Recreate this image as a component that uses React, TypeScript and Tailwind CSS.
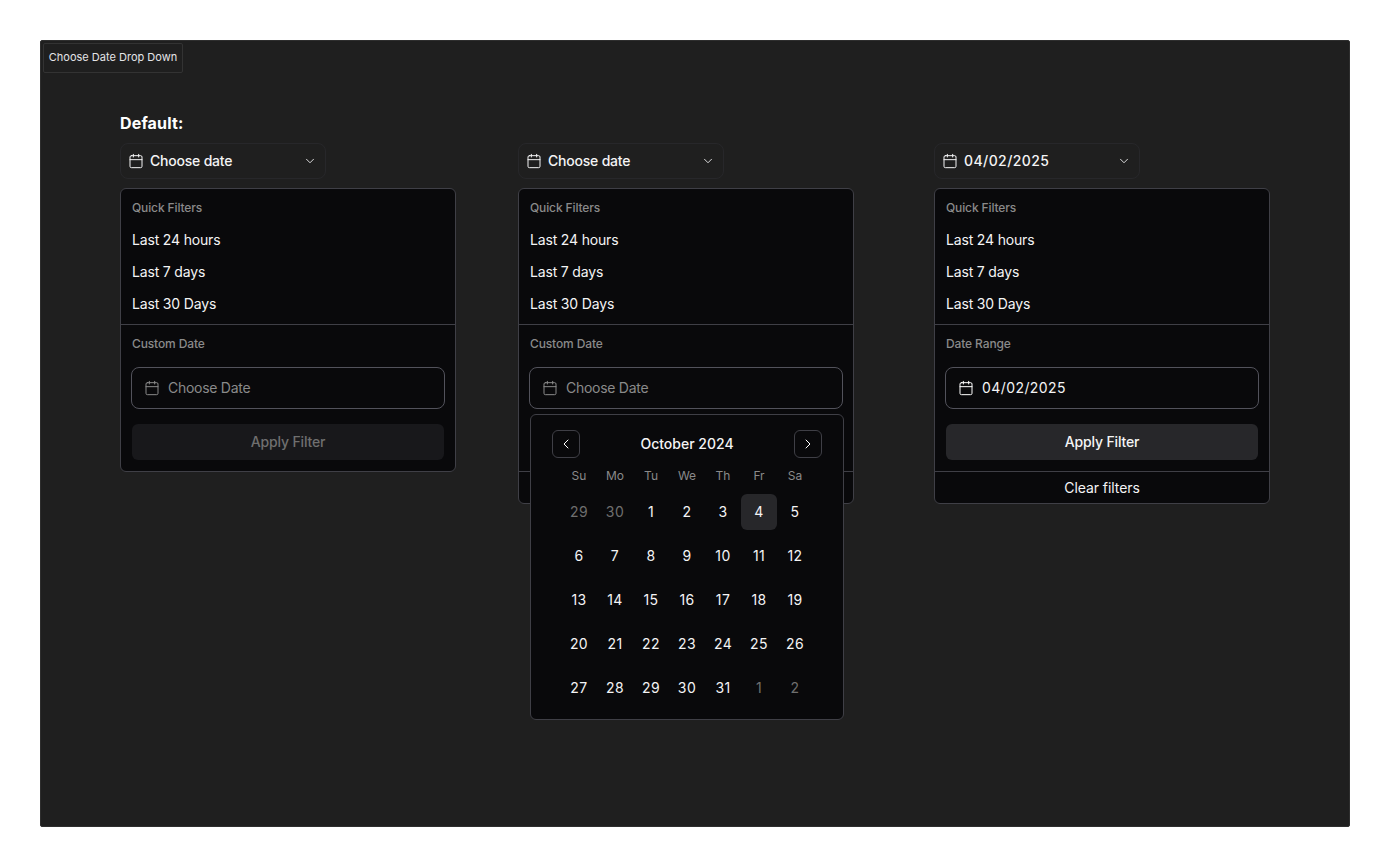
import { Calendar, ChevronDown, ChevronLeft, ChevronRight } from "lucide-react";

const weekDays = ["Su", "Mo", "Tu", "We", "Th", "Fr", "Sa"];
const days = [
  29, 30, 1, 2, 3, 4, 5, 6, 7, 8, 9, 10, 11, 12, 13, 14, 15, 16, 17, 18, 19, 20, 21, 22, 23, 24, 25, 26, 27, 28, 29, 30,
  31, 1, 2,
];

function DateCalendar() {
  return (
    <div className="absolute left-[11px] top-[225px] z-10 h-[306px] w-[314px] rounded-md border border-[#3f3f46] bg-[#09090b] px-[30px] pt-[15px]">
      <div className="mx-[-9px] flex h-[28px] items-center justify-between">
        <button className="flex h-[28px] w-[28px] items-center justify-center rounded-md border border-[#3f3f46] text-white">
          <ChevronLeft size={16} strokeWidth={1.5} />
        </button>
        <span className="text-sm font-[450] text-[#f4f4f5]">October 2024</span>
        <button className="flex h-[28px] w-[28px] items-center justify-center rounded-md border border-[#3f3f46] text-white">
          <ChevronRight size={16} strokeWidth={1.5} />
        </button>
      </div>
      <div className="mt-[8px] grid grid-cols-[repeat(7,36px)]">
        {weekDays.map((d) => (
          <div key={d} className="flex h-[20px] items-center justify-center text-xs text-[#8a8a8a]">
            {d}
          </div>
        ))}
      </div>
      <div className="mt-[8px] grid grid-cols-[repeat(7,36px)] gap-y-[8px]">
        {days.map((d, i) => {
          const outside = i < 2 || i > 32;
          const selected = i === 5;
          return (
            <div
              key={i}
              className={
                "flex h-[36px] items-center justify-center rounded-md text-sm tracking-[0.03em] " +
                (selected ? "bg-[#27272a] " : "") +
                (outside ? "text-[#6f6f6f]" : "text-[#f4f4f5]")
              }
            >
              {d}
            </div>
          );
        })}
      </div>
    </div>
  );
}

interface DropdownProps {
  triggerLabel: string;
  sectionLabel: string;
  inputValue?: string;
  applyEnabled?: boolean;
  showClear?: boolean;
  showCalendar?: boolean;
  className?: string;
}

function DateDropdown({ triggerLabel, sectionLabel, inputValue, applyEnabled, showClear, showCalendar, className }: DropdownProps) {
  // the open calendar covers the apply button and clear row
  const covered = showCalendar ? "invisible " : "";
  return (
    <div className={"w-[336px] " + (className ?? "")}>
      <button className="flex h-[36px] w-[206px] items-center rounded-lg border border-[#27272a] pl-[7px] pr-[8px] text-sm font-[450] text-[#f4f4f5]">
        <Calendar size={16} strokeWidth={1.5} />
        <span className={"ml-[6px] " + (inputValue ? "tracking-[0.03em]" : "tracking-[-0.015em]")}>{triggerLabel}</span>
        <ChevronDown size={14} strokeWidth={1.5} className="ml-auto" />
      </button>
      <div className="relative mt-[9px] rounded-md border border-[#3f3f46] bg-[#09090b]">
        <div className="px-[11px] pt-[12px] pb-[4px]">
          <div className="flex h-[14px] items-center text-xs font-[450] tracking-[-0.01em] text-[#8a8a8a]">Quick Filters</div>
          <div className="mt-[9px] flex flex-col text-sm tracking-[-0.012em] text-[#f4f4f5]">
            <div className="flex h-[32px] items-center">Last 24 hours</div>
            <div className="flex h-[32px] items-center">Last 7 days</div>
            <div className="flex h-[32px] items-center">Last 30 Days</div>
          </div>
        </div>
        <div className="border-t border-[#3f3f46] px-[10px] pb-[11px] pt-[12px]">
          <div className="ml-[1px] flex h-[14px] items-center text-xs font-[450] tracking-[-0.01em] text-[#8a8a8a]">{sectionLabel}</div>
          <div className="mt-[16px] flex h-[42px] items-center rounded-lg border border-[#52525b] pl-[12px]">
            <Calendar size={16} strokeWidth={1.5} className={inputValue ? "text-white" : "text-[#8a8a8a]"} />
            <span
              className={
                "ml-[8px] text-sm " + (inputValue ? "tracking-[0.03em] text-[#f4f4f5]" : "tracking-[-0.02em] text-[#8a8a8a]")
              }
            >
              {inputValue ?? "Choose Date"}
            </span>
          </div>
          <button
            className={
              covered +
              "mx-[1px] mt-[15px] flex h-[36px] w-[312px] items-center justify-center rounded-md text-sm font-[450] tracking-[-0.01em] " +
              (applyEnabled ? "bg-[#27272a] text-[#f4f4f5]" : "bg-[#18181b] text-[#6f6f6f]")
            }
          >
            Apply Filter
          </button>
        </div>
        {showClear && (
          <div className="flex h-[32px] items-center justify-center border-t border-[#3f3f46] text-sm tracking-[-0.005em] text-[#f4f4f5]">
            <span className={covered}>Clear filters</span>
          </div>
        )}
        {showCalendar && <DateCalendar />}
      </div>
    </div>
  );
}

export default function App() {
  return (
    <div className="bg-white p-10 font-['Inter',sans-serif]">
      <div className="h-[787px] rounded-[2px] border border-[#2e2e2e] bg-[#1f1f1f] pl-[2px] pt-[2px]">
        <div className="flex h-[30px] w-[140px] items-center justify-center whitespace-nowrap rounded-[2px] border border-[#333333] pb-px text-[11px] text-[#e4e4e7]">
          Choose Date Drop Down
        </div>
        <div className="pl-[77px]">
          <h2 className="mt-[38px] text-base leading-[24px] font-bold tracking-[0.01em] text-white">Default:</h2>
          <div className="mt-[8px] flex items-start">
            <DateDropdown triggerLabel="Choose date" sectionLabel="Custom Date" />
            <DateDropdown
              className="ml-[62px]"
              triggerLabel="Choose date"
              sectionLabel="Custom Date"
              showClear
              showCalendar
            />
            <DateDropdown
              className="ml-[80px]"
              triggerLabel="04/02/2025"
              sectionLabel="Date Range"
              inputValue="04/02/2025"
              applyEnabled
              showClear
            />
          </div>
        </div>
      </div>
    </div>
  );
}
